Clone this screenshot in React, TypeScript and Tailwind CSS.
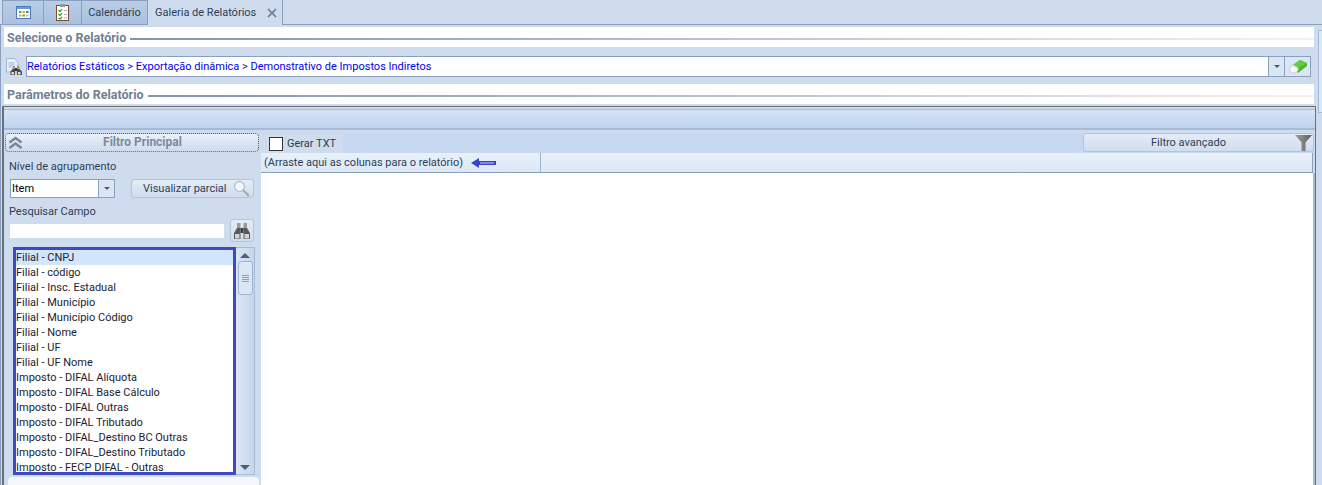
import { X } from 'lucide-react';

const fields = [
  'Filial - CNPJ',
  'Filial - código',
  'Filial - Insc. Estadual',
  'Filial - Município',
  'Filial - Município Código',
  'Filial - Nome',
  'Filial - UF',
  'Filial - UF Nome',
  'Imposto - DIFAL Alíquota',
  'Imposto - DIFAL Base Cálculo',
  'Imposto - DIFAL Outras',
  'Imposto - DIFAL Tributado',
  'Imposto - DIFAL_Destino BC Outras',
  'Imposto - DIFAL_Destino Tributado',
  'Imposto - FECP DIFAL - Outras',
];

function Binoculars() {
  return (
    <svg width="18" height="18" viewBox="0 0 18 18">
      <rect x="4" y="1" width="3.500" height="6" fill="#9a9a9a" />
      <rect x="10.500" y="1" width="3.500" height="6" fill="#9a9a9a" />
      <rect x="7.500" y="6" width="3" height="5" fill="#3f3f3f" />
      <path d="M4 6h3.500v11H1v-6z" fill="#5a5a5a" />
      <path d="M10.500 6H14l3 5v6h-6.500z" fill="#5a5a5a" />
      <rect x="2" y="12" width="4.500" height="4.500" fill="#d4d4d4" />
      <rect x="11.500" y="12" width="4.500" height="4.500" fill="#d4d4d4" />
    </svg>
  );
}

function Section({ title }: { title: string }) {
  return (
    <div className="h-[20px] shrink-0 mr-[4px] ml-[3px] pt-[1px] bg-white flex items-center pl-[3px]">
      <span className="text-[12.5px] leading-[15px] font-bold text-[#6f7f94] whitespace-nowrap">{title}</span>
      <div className="flex-1 h-[2px] ml-[4px] mt-[3px] bg-gradient-to-r from-[#8594aa] to-[#f2f2f2]" />
    </div>
  );
}

export default function App() {
  return (
    <div className="w-[1322px] h-[485px] overflow-hidden bg-[#cfdcee] text-[11px] leading-[15px] flex flex-col" style={{ fontFamily: 'Roboto, sans-serif' }}>
      <div className="h-[25px] shrink-0 flex pl-[2px] border-b border-[#8ba0bf]">
        <div className="w-[42px] bg-gradient-to-b from-[#b9cde6] to-[#a9c0de] border-x border-t border-[#8ba0bf] flex items-center justify-center">
          <svg width="15" height="13" viewBox="0 0 15 13">
            <rect x="0.500" y="0.500" width="14" height="12" fill="#fff" stroke="#4a78b8" />
            <rect x="1" y="1" width="13" height="2" fill="#6a9ad8" />
            <rect x="3" y="5" width="2.500" height="2" fill="#5ba55b" />
            <rect x="6.500" y="5" width="2.500" height="2" fill="#e8a33c" />
            <rect x="10" y="5" width="2.500" height="2" fill="#4a78b8" />
            <rect x="3" y="8.500" width="2.500" height="2" fill="#e8a33c" />
            <rect x="6.500" y="8.500" width="2.500" height="2" fill="#5ba55b" />
            <rect x="10" y="8.500" width="2.500" height="2" fill="#d8c23c" />
          </svg>
        </div>
        <div className="w-[38px] bg-gradient-to-b from-[#b9cde6] to-[#a9c0de] border-r border-t border-[#8ba0bf] flex items-center justify-center">
          <svg width="13" height="17" viewBox="0 0 13 17">
            <rect x="0.500" y="1.500" width="12" height="15" fill="#fff" stroke="#7a4a32" />
            <rect x="4" y="0" width="5" height="3" fill="#999" />
            <path d="M2.500 6l1.500 1.500 2-2.500M2.500 10l1.500 1.500 2-2.500M2.500 14l1.500 1 2-2" stroke="#2f9e2f" strokeWidth="1.200" fill="none" />
            <path d="M8 6.500h3M8 10.500h3M8 14h3" stroke="#aaa" />
          </svg>
        </div>
        <div className="w-[66px] bg-gradient-to-b from-[#b9cde6] to-[#a9c0de] border-r border-t border-[#8ba0bf] flex items-center justify-center text-[#2d3e55] whitespace-nowrap">Calendário</div>
        <div className="w-[135px] h-[25px] bg-[#cfdcee] border-r border-[#8ba0bf] flex items-center pl-[7px] text-[#2d3e55] whitespace-nowrap">
          Galeria de Relatórios
          <X size={14} strokeWidth={3} className="ml-auto mr-[3px] text-[#6c7c92]" />
        </div>
      </div>
      <div className="flex-1 flex min-h-0">
        <div className="flex-1 flex flex-col min-w-0 pt-[2px] border-l border-[#8ba0bf]">
          <Section title="Selecione o Relatório" />
          <div className="flex items-start h-[37px] shrink-0 pt-[9px] pl-[5px] pr-[7px]">
            <svg width="17" height="19" viewBox="0 0 17 19" className="shrink-0 mt-[1px]">
              <path d="M0.500 1.500h8l3.500 3.500v10H0.500z" fill="#e8f0fa" stroke="#9db4d2" />
              <path d="M2.500 6h6M2.500 8h6M2.500 10h3" stroke="#9db4d2" />
              <rect x="6.500" y="9" width="2.500" height="4" fill="#999" />
              <rect x="11" y="9" width="2.500" height="4" fill="#999" />
              <rect x="9" y="11" width="2" height="3" fill="#333" />
              <path d="M6.500 12H9v6H4.500v-3.500z" fill="#4d4d4d" />
              <path d="M11 12h2.500l2.500 2.500V18h-5z" fill="#4d4d4d" />
              <rect x="5.500" y="15" width="2.500" height="2.500" fill="#ddd" />
              <rect x="12" y="15" width="2.500" height="2.500" fill="#ddd" />
            </svg>
            <div className="flex-1 h-[21px] ml-[3px] bg-white border border-[#8ba0bf] flex items-center text-[#0000ee] whitespace-nowrap">
              Relatórios Estáticos &gt; Exportação dinâmica &gt; Demonstrativo de Impostos Indiretos
              <div className="ml-auto flex h-full">
                <div className="w-[16px] border-l border-[#8ba0bf] bg-[#dbe6f4] flex items-center justify-center">
                  <div className="w-0 h-0 border-x-[3px] border-x-transparent border-t-[3px] border-t-[#4a5a70]" />
                </div>
                <div className="w-[26px] border-l border-[#8ba0bf] bg-[#dbe6f4] flex items-center justify-center">
                  <svg width="19" height="14" viewBox="0 0 19 14">
                    <path d="M5 5l7-5 7 3v3l-9 7z" fill="#4fb52f" />
                    <path d="M5 5l7-5 7 3-9 5z" fill="#66cc3f" />
                    <path d="M1 8.500l4-3.500 5 3v2.500l-3 2.500H3z" fill="#f6f6f6" stroke="#cfcfcf" />
                  </svg>
                </div>
              </div>
            </div>
          </div>
          <Section title="Parâmetros do Relatório" />
          <div className="flex-1 min-h-0 mt-[2px] mr-[2px] ml-[1px] pt-[2px] border-t border-l-2 border-r border-[#6b6f76] flex flex-col">
            <div className="h-[21px] shrink-0 bg-gradient-to-b from-[#d6e4f7] to-[#bfd3ee] border-b-2 border-[#a7bbd8] border-t border-t-[#a7bbd8]" />
            <div className="flex-1 flex min-h-0 pt-[3px]">
              <div className="w-[257px] shrink-0 flex flex-col pl-[1px] pr-[2px]">
                <div className="h-[19px] flex items-center bg-gradient-to-b from-[#e8f0fa] to-[#cfdcee] border border-dotted border-[#556] rounded-sm shrink-0">
                  <svg width="15" height="14" viewBox="0 0 15 14" className="ml-[2px] shrink-0">
                    <path d="M1.500 6.500L7.500 2l6 4.500M1.500 12L7.500 7.500l6 4.500" fill="none" stroke="#7a8594" strokeWidth="2.500" />
                  </svg>
                  <span className="flex-1 text-center font-bold text-[12px] text-[#7d8a9c] pl-[4px]">Filtro Principal</span>
                </div>
                <div className="mt-[7px] ml-[4px] text-[#2d3e55]">Nível de agrupamento</div>
                <div className="flex mt-[5px] ml-[5px] items-center">
                  <div className="w-[105px] h-[19px] bg-white border border-[#8ba0bf] flex items-center pl-[1px] text-black">
                    Item
                    <div className="ml-auto w-[16px] h-full border-l border-[#8ba0bf] bg-[#dbe6f4] flex items-center justify-center">
                      <div className="w-0 h-0 border-x-[3px] border-x-transparent border-t-[3px] border-t-[#4a5a70]" />
                    </div>
                  </div>
                  <div className="ml-[16px] w-[123px] h-[19px] rounded-[3px] border border-[#b3c4dc] bg-gradient-to-b from-[#e4ecf7] to-[#d0ddef] flex items-center pl-[11px] text-[#2d3e55] whitespace-nowrap">
                    Visualizar parcial
                    <svg width="17" height="17" viewBox="0 0 17 17" className="ml-auto mr-[3px]">
                      <circle cx="6.500" cy="6.500" r="5" fill="#f2f6fb" stroke="#b8c4d2" strokeWidth="1.500" />
                      <path d="M10 10l6 6" stroke="#a8a8a8" strokeWidth="2" />
                    </svg>
                  </div>
                </div>
                <div className="mt-[6px] ml-[4px] text-[#2d3e55]">Pesquisar Campo</div>
                <div className="flex ml-[5px] items-start h-[23px] shrink-0">
                  <div className="w-[214px] h-[14px] mt-[5px] bg-white" />
                  <div className="ml-[6px] w-[24px] h-[23px] rounded-[3px] border border-[#b3c4dc] bg-gradient-to-b from-[#e4ecf7] to-[#d0ddef] flex items-center justify-center">
                    <Binoculars />
                  </div>
                </div>
                <div className="flex mt-[5px] ml-[8px] h-[228px] shrink-0">
                  <div className="w-[223px] h-[228px] bg-white border-[3px] border-[#3f49c4] text-[#1a2230] overflow-hidden">
                    {fields.map((f, i) => (
                      <div key={f} className={`h-[15px] whitespace-nowrap ${i === 0 ? 'bg-[#d3e5fb]' : ''}`}>{f}</div>
                    ))}
                  </div>
                  <div className="w-[19px] h-[228px] border border-[#a7bbd8] border-l-0 bg-gradient-to-r from-[#dbe6f4] to-[#c6d6ea] flex flex-col items-center">
                    <div className="mt-[5px] w-0 h-0 border-x-[5px] border-x-transparent border-b-[5px] border-b-[#4a5f82]" />
                    <div className="mt-[3px] w-[15px] h-[34px] rounded-[3px] border border-[#9db4d2] bg-[#dbe6f4] flex flex-col items-center justify-center gap-[1px]">
                      <div className="w-[7px] h-[1px] bg-[#8ba0bf]" />
                      <div className="w-[7px] h-[1px] bg-[#8ba0bf]" />
                      <div className="w-[7px] h-[1px] bg-[#8ba0bf]" />
                      <div className="w-[7px] h-[1px] bg-[#8ba0bf]" />
                    </div>
                    <div className="mt-auto mb-[4px] w-0 h-0 border-x-[5px] border-x-transparent border-t-[5px] border-t-[#4a5f82]" />
                  </div>
                </div>
                <div className="h-[10px] ml-[3px] mt-[2px] bg-[#f4f7fb] rounded-t-sm" />
              </div>
              <div className="flex-1 min-w-0 flex flex-col">
                <div className="h-[20px] flex shrink-0 bg-[#c6d8f0] mr-[1px]">
                  <div className="w-[82px] h-[19px] mt-[1px] bg-[#cfdcee] flex items-center">
                    <div className="w-[14px] h-[14px] ml-[8px] bg-white border border-[#333] shrink-0" />
                    <span className="ml-[4px] text-[#2d3e55] whitespace-nowrap">Gerar TXT</span>
                  </div>
                  <div className="ml-auto w-[231px] h-[19px] rounded-[3px] border border-[#b3c4dc] bg-gradient-to-b from-[#e4ecf7] to-[#d0ddef] flex items-center justify-center pr-[20px] relative text-[#2d3e55] whitespace-nowrap">
                    Filtro avançado
                    <svg width="17" height="17" viewBox="0 0 17 17" className="absolute right-[1px] top-[0px]">
                      <defs>
                        <linearGradient id="funil" x1="0" y1="0" x2="1" y2="0">
                          <stop offset="0" stopColor="#a0a0a0" />
                          <stop offset="1" stopColor="#5e5e5e" />
                        </linearGradient>
                      </defs>
                      <path d="M0 1h17L10.500 8.500V17h-4V8.500z" fill="url(#funil)" />
                    </svg>
                  </div>
                </div>
                <div className="h-[20px] flex shrink-0 bg-gradient-to-b from-[#e8f0fa] to-[#dde8f6] border-b border-r border-[#8ba0bf] mr-[2px]">
                  <div className="w-[280px] h-full flex items-center border-r border-[#9db4d2] pl-[3px] text-[#2d3e55] whitespace-nowrap">
                    (Arraste aqui as colunas para o relatório)
                    <svg width="26" height="10" viewBox="0 0 26 10" className="ml-auto mr-[43px]">
                      <path d="M0 5l8-5v3h17v4H8v3z" fill="#3a42c8" />
                      <path d="M9 4.500h14v1H9z" fill="#c9d2f2" />
                    </svg>
                  </div>
                </div>
                <div className="flex-1 bg-white border-r-2 border-[#a7bbd8]" />
              </div>
            </div>
          </div>
        </div>
        <div className="w-[4px] shrink-0 mt-[5px] border-l border-t border-b border-[#a7bbd8] bg-[#dbe6f4] h-[83px]" />
      </div>
    </div>
  );
}
